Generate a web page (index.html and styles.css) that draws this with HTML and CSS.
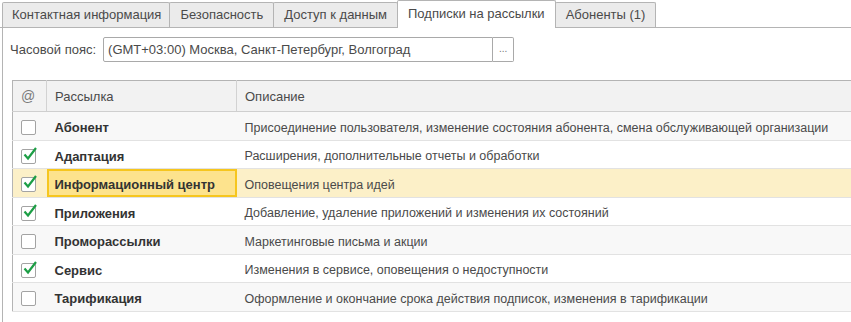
FILE: index.html
```html
<!DOCTYPE html>
<html lang="ru">
<head>
  <meta charset="UTF-8" />
  <title>Подписки на рассылки</title>
  <link rel="stylesheet" href="styles.css">
</head>
<body>
  <div class="tabs">
    <div class="tab">Контактная информация</div>
    <div class="tab">Безопасность</div>
    <div class="tab">Доступ к данным</div>
    <div class="tab active">Подписки на рассылки</div>
    <div class="tab">Абоненты (1)</div>
  </div>

  <div class="page">
    <div class="tz-row">
      <span class="tz-label">Часовой пояс:</span>
      <div class="field">
        <span class="field-value">(GMT+03:00) Москва, Санкт-Петербург, Волгоград</span>
        <span class="field-btn">...</span>
      </div>
    </div>

    <table class="grid">
      <thead>
        <tr>
          <th class="col-check">@</th>
          <th class="col-name">Рассылка</th>
          <th>Описание</th>
        </tr>
      </thead>
      <tbody>
        <tr class="odd">
          <td class="col-check"><span class="cb"></span></td>
          <td class="name">Абонент</td>
          <td class="descr">Присоединение пользователя, изменение состояния абонента, смена обслуживающей организации</td>
        </tr>
        <tr>
          <td class="col-check"><span class="cb checked"><svg viewBox="0 0 16 16"><path d="M2.5 8.5 L6 12.5 L14 2"/></svg></span></td>
          <td class="name">Адаптация</td>
          <td class="descr">Расширения, дополнительные отчеты и обработки</td>
        </tr>
        <tr class="selected">
          <td class="col-check"><span class="cb checked"><svg viewBox="0 0 16 16"><path d="M2.5 8.5 L6 12.5 L14 2"/></svg></span></td>
          <td class="name current">Информационный центр</td>
          <td class="descr">Оповещения центра идей</td>
        </tr>
        <tr>
          <td class="col-check"><span class="cb checked"><svg viewBox="0 0 16 16"><path d="M2.5 8.5 L6 12.5 L14 2"/></svg></span></td>
          <td class="name">Приложения</td>
          <td class="descr">Добавление, удаление приложений и изменения их состояний</td>
        </tr>
        <tr class="odd">
          <td class="col-check"><span class="cb"></span></td>
          <td class="name">Проморассылки</td>
          <td class="descr">Маркетинговые письма и акции</td>
        </tr>
        <tr>
          <td class="col-check"><span class="cb checked"><svg viewBox="0 0 16 16"><path d="M2.5 8.5 L6 12.5 L14 2"/></svg></span></td>
          <td class="name">Сервис</td>
          <td class="descr">Изменения в сервисе, оповещения о недоступности</td>
        </tr>
        <tr class="odd">
          <td class="col-check"><span class="cb"></span></td>
          <td class="name">Тарификация</td>
          <td class="descr">Оформление и окончание срока действия подписок, изменения в тарификации</td>
        </tr>
      </tbody>
    </table>
  </div>
</body>
</html>
```

FILE: styles.css
```css
* {
  box-sizing: border-box;
}

body {
  margin: 0;
  background: #fff;
  color: #4a4a4a;
  font-family: 'Liberation Sans', Arial, sans-serif;
  font-size: 13px;
  overflow: hidden;
  width: 851px;
  height: 322px;
}

.tabs {
  display: flex;
  align-items: flex-end;
  height: 28px;
  padding-left: 2px;
  border-bottom: 1px solid #b4b4b4;
}

.tab {
  height: 25px;
  padding: 0 10px;
  margin-right: -1px;
  line-height: 23px;
  background: #ebebeb;
  border: 1px solid #b4b4b4;
  border-bottom: none;
  border-radius: 2px 2px 0 0;
  white-space: nowrap;
}

.tab:first-child {
  padding: 0 8px 0 9px;
}

.tab.active {
  height: 28px;
  line-height: 26px;
  margin-bottom: -1px;
  background: #fff;
  position: relative;
}

.page {
  margin-left: 2px;
  height: 294px;
  padding: 9px 0 0 7px;
  border-left: 1px solid #b4b4b4;
}

.tz-row {
  display: flex;
  align-items: center;
  gap: 7px;
}

.field {
  display: flex;
  height: 25px;
}

.field-value {
  width: 390px;
  padding: 0 4px;
  line-height: 23px;
  border: 1px solid #a9a9a9;
  border-radius: 2px 0 0 2px;
  white-space: nowrap;
}

.field-btn {
  width: 21px;
  line-height: 21px;
  text-align: center;
  font-size: 10px;
  color: #777;
  border: 1px solid #a9a9a9;
  border-left: none;
  border-radius: 0 2px 2px 0;
}

.grid {
  margin: 18px 0 0 2px;
  width: 900px;
  border-collapse: collapse;
  border-top: 1px solid #b4b4b4;
  border-left: 1px solid #b4b4b4;
}

.grid th {
  height: 31px;
  padding: 0 0 0 8px;
  text-align: left;
  font-weight: normal;
  background: #f2f2f2;
  border-right: 1px solid #d2d2d2;
  border-bottom: 1px solid #cfcfcf;
}

.grid th.col-check {
  color: #7a7a7a;
  font-size: 14px;
}

.grid td {
  height: 28.5px;
  padding: 4px 0 0 8px;
  border-bottom: 1px solid #e2e2e2;
  white-space: nowrap;
}

.grid td.descr {
  font-size: 12.5px;
}

.col-check {
  width: 34px;
}

.col-name {
  width: 190px;
}

.grid tr.odd td {
  background: #f8f8f8;
}

.grid tr.selected td {
  background: #fcf0c8;
}

.grid td.name {
  font-weight: bold;
  color: #333;
}

.grid tr.selected td.current {
  background: #fde38d;
  box-shadow: inset 0 0 0 2px #f6c61e;
}

.cb {
  display: block;
  position: relative;
  width: 15px;
  height: 15px;
  background: #fff;
  border: 1px solid #a3a3a3;
  border-radius: 2px;
}

.cb svg {
  position: absolute;
  left: 0;
  top: -4px;
  width: 16px;
  height: 16px;
  fill: none;
  stroke: #1c9e45;
  stroke-width: 2.2;
}
```
